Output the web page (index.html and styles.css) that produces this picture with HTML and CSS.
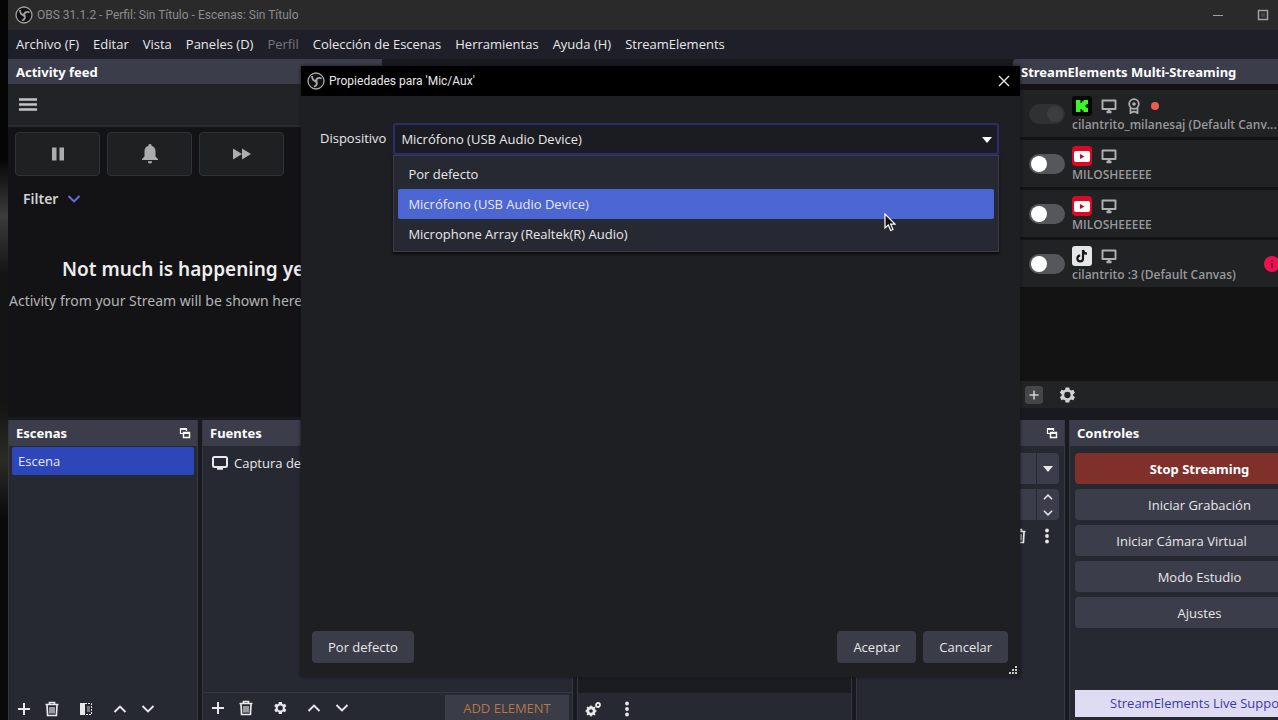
FILE: index.html
```html
<!DOCTYPE html>
<html lang="es">
<head>
    <meta charset="UTF-8">
    <title>OBS 31.1.2 - Perfil: Sin Título - Escenas: Sin Título</title>
    <link rel="stylesheet" href="styles.css">
</head>
<body>
    <!-- Shared icons -->
    <svg class="sprite" aria-hidden="true">
        <symbol id="obs" viewBox="0 0 18 18"><circle cx="9" cy="9" r="8" fill="#111" stroke="currentColor" stroke-width="1.3"/><path d="M5 4c0 3 1.500 4.800 4 5M14.500 6.500c-2.500-1.500-5-.5-5.500 2.500M7 14.500c2.800-.8 3.700-3 2-5.500" fill="none" stroke="currentColor" stroke-width="1.800"/><circle cx="9" cy="9" r="1.500" fill="currentColor"/></symbol>
        <symbol id="plus" viewBox="0 0 16 16"><path d="M8 2v12M2 8h12" stroke="currentColor" stroke-width="2"/></symbol>
        <symbol id="trash" viewBox="0 0 16 16"><path d="M1.500 3.500h13M5.500 3V1.500h5V3M3 4l.6 10.500h8.800L13 4" fill="none" stroke="currentColor" stroke-width="1.700"/><path d="M6 6v6.500M8 6v6.500M10 6v6.500" stroke="currentColor" stroke-width="1.200"/></symbol>
        <symbol id="up" viewBox="0 0 16 16"><path d="M2.500 11 8 5.500l5.500 5.500" fill="none" stroke="currentColor" stroke-width="1.900"/></symbol>
        <symbol id="down" viewBox="0 0 16 16"><path d="M2.500 5 8 10.500 13.500 5" fill="none" stroke="currentColor" stroke-width="1.900"/></symbol>
        <symbol id="gear" viewBox="0 0 24 24"><path fill="currentColor" fill-rule="evenodd" d="M19.400 13a7 7 0 0 0 0-2l2.200-1.700-2.100-3.600-2.600 1a8 8 0 0 0-1.700-1L14.800 3h-4.600l-.4 2.700a8 8 0 0 0-1.700 1l-2.600-1-2.100 3.600L5.600 11a7 7 0 0 0 0 2l-2.200 1.700 2.100 3.600 2.600-1a8 8 0 0 0 1.700 1l.4 2.700h4.600l.4-2.700a8 8 0 0 0 1.700-1l2.600 1 2.100-3.600zM12.500 15.800a3.800 3.800 0 1 1 0-7.600 3.800 3.800 0 0 1 0 7.600z"/></symbol>
        <symbol id="dots" viewBox="0 0 16 16"><circle cx="8" cy="2.500" r="1.900" fill="currentColor"/><circle cx="8" cy="8" r="1.900" fill="currentColor"/><circle cx="8" cy="13.500" r="1.900" fill="currentColor"/></symbol>
        <symbol id="popout" viewBox="0 0 12 12"><path d="M7.500 4V1.500h-6v5H4" fill="none" stroke="currentColor" stroke-width="1.200"/><path d="M1 2h7" stroke="currentColor" stroke-width="1.800"/><path d="M4.500 5.500h6v5h-6zM4 6.200h7" fill="none" stroke="currentColor" stroke-width="1.400"/></symbol>
        <symbol id="screen" viewBox="0 0 16 16"><path d="M1.500 2.500h13v8.500h-13z" fill="none" stroke="currentColor" stroke-width="1.900" stroke-linejoin="round"/><path d="M5.500 14h5M8 11v3" stroke="currentColor" stroke-width="2.400"/></symbol>
        <symbol id="source" viewBox="0 0 18 18"><rect x="2" y="3" width="14" height="10" rx="1.500" fill="none" stroke="currentColor" stroke-width="2"/><path d="M6 14.500h6" stroke="currentColor" stroke-width="2.500"/></symbol>
        <symbol id="youtube" viewBox="0 0 20 20"><rect width="20" height="20" rx="4" fill="#dc0826"/><rect x="2" y="5" width="16" height="11" rx="2" fill="#fff"/><path d="M8 8v5l4.500-2.500z" fill="#c00522"/></symbol>
        <symbol id="arrow" viewBox="0 0 10 6"><path d="M0 0h10L5 6z" fill="currentColor"/></symbol>
    </svg>

    <div class="window">
        <header class="titlebar">
            <svg class="icon-18"><use href="#obs"/></svg>
            <span class="caption">OBS 31.1.2 - Perfil: Sin Título - Escenas: Sin Título</span>
            <button class="win-btn" aria-label="Minimizar"><svg class="icon-12" viewBox="0 0 12 12"><path d="M1 6.500h10" stroke="currentColor"/></svg></button>
            <button class="win-btn" aria-label="Maximizar"><svg class="icon-12" viewBox="0 0 12 12"><path d="M1.500 1.500h9v9h-9z" fill="none" stroke="currentColor" stroke-width="1.500"/><path d="M4 4h4v4H4z" fill="#444"/></svg></button>
        </header>

        <nav class="menubar">
            <button>Archivo (F)</button>
            <button>Editar</button>
            <button>Vista</button>
            <button>Paneles (D)</button>
            <button disabled>Perfil</button>
            <button>Colección de Escenas</button>
            <button>Herramientas</button>
            <button>Ayuda (H)</button>
            <button>StreamElements</button>
        </nav>

        <main class="upper">
            <section class="feed">
                <h2 class="dock-title">Activity feed</h2>
                <div class="feed-toolbar">
                    <button aria-label="Menu"><svg class="icon-20" viewBox="0 0 20 20"><path d="M1 4.500h18M1 9.500h18M1 14.500h18" stroke="currentColor" stroke-width="2.500"/></svg></button>
                </div>
                <div class="feed-body">
                    <div class="feed-actions">
                        <button aria-label="Pause"><svg class="icon-20" viewBox="0 0 20 20"><path d="M4 3.500h4.500v13H4zM11.500 3.500H16v13h-4.500z" fill="currentColor"/></svg></button>
                        <button aria-label="Mute"><svg class="icon-20" viewBox="0 0 20 20"><path d="M10 0a1.500 1.500 0 0 1 1.500 1.700C14 2.400 15.500 4.500 15.500 7v5.500L18 15v1H2v-1l2.500-2.500V7c0-2.500 1.500-4.600 4-5.300A1.500 1.500 0 0 1 10 0zM7.800 17.300h4.400a2.200 2.200 0 0 1-4.400 0z" fill="currentColor"/></svg></button>
                        <button aria-label="Skip"><svg class="icon-20" viewBox="0 0 20 20"><path d="M1 4.500v11l9-5.500zM10 4.500v11l9-5.500z" fill="currentColor"/></svg></button>
                    </div>
                    <button class="filter">Filter <svg class="icon-16"><use href="#down"/></svg></button>
                    <h3>Not much is happening yet</h3>
                    <p>Activity from your Stream will be shown here</p>
                </div>
            </section>

            <section class="preview"></section>

            <section class="multi">
                <h2 class="dock-title">StreamElements Multi-Streaming</h2>
                <ul class="channels">
                    <li>
                        <input type="checkbox" class="switch" id="ch1" disabled>
                        <label for="ch1">
                            <span class="badges">
                                <svg class="icon-20" viewBox="0 0 20 20"><rect width="20" height="20" rx="3" fill="#050805"/><path d="M4 4h4.500v3H10V5.500h1.500V4H16v4h-1.500v1.500H13v1h1.500V12H16v4h-4.500v-1.500H10V13H8.500v3H4z" fill="#3df52b"/></svg>
                                <svg class="icon-16"><use href="#screen"/></svg>
                                <svg class="icon-16" viewBox="0 0 16 16"><circle cx="8" cy="6" r="4.800" fill="none" stroke="currentColor" stroke-width="1.800"/><circle cx="8" cy="6" r="1.800" fill="currentColor"/><path d="M4.500 10v5L8 13.500l3.500 1.500v-5" fill="none" stroke="currentColor" stroke-width="1.800"/></svg>
                                <i class="live"></i>
                            </span>
                            cilantrito_milanesaj (Default Canv...
                        </label>
                    </li>
                    <li>
                        <input type="checkbox" class="switch" id="ch2">
                        <label for="ch2">
                            <span class="badges"><svg class="icon-20"><use href="#youtube"/></svg><svg class="icon-16"><use href="#screen"/></svg></span>
                            MILOSHEEEEE
                        </label>
                    </li>
                    <li>
                        <input type="checkbox" class="switch" id="ch3">
                        <label for="ch3">
                            <span class="badges"><svg class="icon-20"><use href="#youtube"/></svg><svg class="icon-16"><use href="#screen"/></svg></span>
                            MILOSHEEEEE
                        </label>
                    </li>
                    <li>
                        <input type="checkbox" class="switch" id="ch4">
                        <label for="ch4">
                            <span class="badges">
                                <svg class="icon-20" viewBox="0 0 20 20"><rect width="20" height="20" rx="3" fill="#e6e6e8"/><path d="M11 4v8.500a2.800 2.800 0 1 1-2.800-2.800M11 4c.3 2.300 1.700 3.600 4 3.700" fill="none" stroke="#17171a" stroke-width="2.200"/></svg>
                                <svg class="icon-16"><use href="#screen"/></svg>
                            </span>
                            cilantrito :3 (Default Canvas)
                        </label>
                        <svg class="alert icon-16" viewBox="0 0 16 16"><circle cx="8" cy="8" r="8" fill="#ee1152"/><path d="M8 4v1.500M8 7v5" stroke="#8b0a38" stroke-width="2"/></svg>
                    </li>
                </ul>
                <div class="multi-footer">
                    <button class="add" aria-label="Add"><svg class="icon-12"><use href="#plus"/></svg></button>
                    <button aria-label="Settings"><svg class="icon-20"><use href="#gear"/></svg></button>
                </div>
            </section>
        </main>

        <footer class="lower">
            <section class="dock">
                <h2 class="dock-title">Escenas <svg class="icon-12"><use href="#popout"/></svg></h2>
                <ul class="scenes"><li>Escena</li></ul>
                <div class="dock-toolbar">
                    <button aria-label="Añadir"><svg class="icon-16"><use href="#plus"/></svg></button>
                    <button aria-label="Eliminar"><svg class="icon-16"><use href="#trash"/></svg></button>
                    <button class="spaced" aria-label="Filtros"><svg class="icon-16" viewBox="0 0 16 16"><path d="M2 2h5v12H2z" fill="currentColor"/><path d="M7 2.500h6.500v11H7" fill="none" stroke="currentColor" stroke-dasharray="2 1"/><path d="M9 5h3v6H9z" fill="#777"/></svg></button>
                    <button class="spaced" aria-label="Subir"><svg class="icon-16"><use href="#up"/></svg></button>
                    <button aria-label="Bajar"><svg class="icon-16"><use href="#down"/></svg></button>
                </div>
            </section>

            <section class="dock">
                <h2 class="dock-title">Fuentes</h2>
                <ul class="sources"><li><svg class="icon-18"><use href="#source"/></svg>Captura de pantalla</li></ul>
                <div class="dock-toolbar lined">
                    <button aria-label="Añadir fuente"><svg class="icon-16"><use href="#plus"/></svg></button>
                    <button aria-label="Eliminar fuente"><svg class="icon-16"><use href="#trash"/></svg></button>
                    <button class="spaced" aria-label="Propiedades"><svg class="icon-16"><use href="#gear"/></svg></button>
                    <button class="spaced" aria-label="Subir fuente"><svg class="icon-16"><use href="#up"/></svg></button>
                    <button aria-label="Bajar fuente"><svg class="icon-16"><use href="#down"/></svg></button>
                    <button class="add-element">ADD ELEMENT</button>
                </div>
            </section>

            <section class="dock">
                <h2 class="dock-title">Mezclador de audio</h2>
                <div class="mixer"></div>
                <div class="dock-toolbar">
                    <button aria-label="Propiedades avanzadas"><svg class="icon-16" viewBox="0 0 16 16"><circle cx="6" cy="10" r="3.500" fill="none" stroke="currentColor" stroke-width="2.500"/><path d="M6 4.500v11M.5 10h11M2 6l8 8M10 6l-8 8" stroke="currentColor" stroke-width="1.500"/><circle cx="6" cy="10" r="1.800" fill="#262832"/><circle cx="13" cy="4" r="2" fill="none" stroke="currentColor" stroke-width="1.800"/></svg></button>
                    <button class="spaced" aria-label="Más"><svg class="icon-16"><use href="#dots"/></svg></button>
                </div>
            </section>

            <section class="dock">
                <h2 class="dock-title">Transiciones <svg class="icon-12"><use href="#popout"/></svg></h2>
                <div class="transitions">
                    <button class="field" aria-label="Transición"><span><svg class="arrow"><use href="#arrow"/></svg></span></button>
                    <div class="field">
                        <span class="stepper">
                            <button aria-label="Aumentar"><svg class="icon-12"><use href="#up"/></svg></button>
                            <button aria-label="Reducir"><svg class="icon-12"><use href="#down"/></svg></button>
                        </span>
                    </div>
                    <div class="row">
                        <button aria-label="Quitar transición"><svg class="icon-16"><use href="#trash"/></svg></button>
                        <button aria-label="Opciones"><svg class="icon-16"><use href="#dots"/></svg></button>
                    </div>
                </div>
            </section>

            <section class="dock">
                <h2 class="dock-title">Controles</h2>
                <div class="controls">
                    <button class="stop">Stop Streaming</button>
                    <button>Iniciar Grabación</button>
                    <div class="split">
                        <button>Iniciar Cámara Virtual</button>
                        <button class="config" aria-label="Configurar cámara virtual"><svg class="icon-16"><use href="#gear"/></svg></button>
                    </div>
                    <button>Modo Estudio</button>
                    <button>Ajustes</button>
                    <a class="support" href="#">StreamElements Live Support</a>
                </div>
            </section>
        </footer>
    </div>

    <dialog class="properties" open aria-labelledby="propTitle">
        <header>
            <svg class="icon-18"><use href="#obs"/></svg>
            <h1 id="propTitle">Propiedades para 'Mic/Aux'</h1>
            <button aria-label="Cerrar"><svg class="icon-12" viewBox="0 0 12 12"><path d="m1 1 10 10M11 1 1 11" stroke="currentColor" stroke-width="1.400"/></svg></button>
        </header>
        <form class="prop-form" onsubmit="return false">
            <label for="device">Dispositivo</label>
            <div class="combo">
                <select id="device">
                    <option>Por defecto</option>
                    <option selected>Micrófono (USB Audio Device)</option>
                    <option>Microphone Array (Realtek(R) Audio)</option>
                </select>
                <svg class="arrow"><use href="#arrow"/></svg>
                <ul class="popup" role="listbox" aria-label="Dispositivo">
                    <li role="option">Por defecto</li>
                    <li role="option" aria-selected="true">Micrófono (USB Audio Device)</li>
                    <li role="option">Microphone Array (Realtek(R) Audio)</li>
                </ul>
            </div>
        </form>
        <div class="prop-buttons">
            <button class="defaults">Por defecto</button>
            <button>Aceptar</button>
            <button>Cancelar</button>
        </div>
        <svg class="grip" viewBox="0 0 9 9"><path d="M6 0h2v2H6zM3 3h2v2H3zM6 3h2v2H6zM0 6h2v2H0zM3 6h2v2H3zM6 6h2v2H6z" fill="#c8c8c8"/></svg>
    </dialog>

    <svg class="pointer" viewBox="0 0 12 19"><path d="M1 1v14l3.300-3 2.400 5.500 2.300-1-2.400-5.300H11z" fill="#111" stroke="#fff" stroke-width="1.200"/></svg>
</body>
</html>
```

FILE: styles.css
```css
* {
    box-sizing: border-box;
}

body {
    margin: 0;
    height: 100vh;
    overflow: hidden;
    position: relative;
    padding-left: 8px;
    background: linear-gradient(#050505 0 22%, #3c3c3c 30%, #141414 38% 56%, #2a2a26 64%, #0a0a0a 72%);
    color: #e8e8ea;
    font-family: "Open Sans", "Noto Sans", sans-serif;
    font-size: 13px;
    line-height: 18px;
}

h1, h2, h3, p, ul {
    margin: 0;
    padding: 0;
    list-style: none;
}

button {
    display: flex;
    align-items: center;
    justify-content: center;
    margin: 0;
    padding: 0;
    border: none;
    background: none;
    color: inherit;
    font: inherit;
}

svg {
    display: block;
    flex: none;
}

.sprite {
    position: absolute;
    width: 0;
    height: 0;
}

.icon-12 { width: 12px; height: 12px; }
.icon-16 { width: 16px; height: 16px; }
.icon-18 { width: 18px; height: 18px; }
.icon-20 { width: 20px; height: 20px; }
.arrow { width: 10px; height: 6px; }

/* Main window, runs past the right edge of the screen */
.window {
    width: calc(100% + 52px);
    height: 100%;
    display: flex;
    flex-direction: column;
    background: #191a20;
}

.titlebar {
    height: 30px;
    display: flex;
    align-items: center;
    gap: 4px;
    padding: 0 47px 0 7px;
    background: #2a2a2a;
    color: #a0a0a0;
}

.caption {
    flex: 1;
    font-family: Roboto, sans-serif;
    font-size: 12px;
    color: #8c8c8c;
}

.win-btn {
    width: 41px;
}

.menubar {
    height: 29px;
    display: flex;
    padding: 0 0 2px 1px;
    background: #1e1f28;
}

.menubar button {
    padding: 0 7px;
}

.menubar button:disabled {
    color: #77777e;
}

.dock-title {
    height: 26px;
    flex: none;
    display: flex;
    align-items: center;
    justify-content: space-between;
    padding: 0 6px 0 7px;
    background: #3c3d4a;
    color: #fff;
    font-family: "Noto Sans", sans-serif;
    font-size: 13px;
    font-weight: 700;
}

.upper {
    flex: 1;
    display: grid;
    grid-template-columns: 374px 1fr 317px;
    padding-bottom: 3px;
}

.upper .dock-title {
    height: 25px;
    padding-left: 8px;
}

.feed,
.multi {
    display: flex;
    flex-direction: column;
}

/* Activity feed */
.feed-toolbar {
    height: 43px;
    display: flex;
    padding-left: 10px;
    background: #222326;
    border-bottom: 2px solid #2a2b2e;
    color: #c4c4c6;
}

.feed-body {
    flex: 1;
    padding: 5px 0 0 7px;
    background: #131315;
    font-family: "Noto Sans", sans-serif;
}

.feed-actions {
    display: flex;
    gap: 7px;
}

.feed-actions button {
    width: 85px;
    height: 44px;
    background: #1e2022;
    border: 1px solid #303235;
    border-radius: 4px;
    color: #acacae;
}

.filter {
    gap: 8px;
    margin: 13px 0 0 8px;
    font-size: 14px;
    font-weight: 600;
    line-height: 20px;
    color: #d2d2d4;
}

.filter svg {
    color: #6570de;
}

.feed-body h3 {
    margin: 46px 0 0 47px;
    font-size: 19px;
    font-weight: 600;
    line-height: 28px;
    color: #ededee;
    white-space: nowrap;
}

.feed-body p {
    margin: 8px 0 0 -6px;
    font-size: 14px;
    line-height: 20px;
    color: #b4b4b6;
    white-space: nowrap;
}

/* Multi-streaming */
.multi .dock-title {
    border-radius: 4px 0 0 0;
}

.channels {
    flex: 1;
    padding: 6px 0 0 7px;
    background: #131314;
}

.channels li {
    height: 47px;
    margin-bottom: 3px;
    display: flex;
    align-items: center;
    gap: 7px;
    padding-left: 9px;
    background: #212224;
}

.channels label {
    width: 206px;
    height: 44px;
    padding-top: 4px;
    font-size: 12px;
    font-weight: 600;
    line-height: 18px;
    color: #98989a;
    white-space: nowrap;
}

.badges {
    height: 20px;
    display: flex;
    align-items: center;
    gap: 9px;
    color: #b0b0b2;
}

.live {
    width: 8px;
    height: 8px;
    border-radius: 50%;
    background: #f0594f;
}

.switch {
    appearance: none;
    width: 36px;
    height: 20px;
    margin: 0;
    padding: 2px;
    flex: none;
    border-radius: 10px;
    background: #56575a;
}

.switch::before {
    content: "";
    display: block;
    width: 16px;
    height: 16px;
    border-radius: 50%;
    background: #fff;
}

.switch:disabled {
    background: #303133;
}

.switch:disabled::before {
    margin-left: auto;
    background: #3c3d3f;
}

.alert {
    margin-left: -21px;
}

.multi-footer {
    height: 27px;
    margin-bottom: 9px;
    display: flex;
    align-items: center;
    gap: 14px;
    padding-left: 12px;
    background: #222324;
    color: #d2d2d4;
}

.multi-footer .add {
    width: 18px;
    height: 18px;
    border-radius: 3px;
    background: #454648;
}

/* Bottom docks */
.lower {
    height: 300px;
    display: grid;
    grid-template-columns: 190px 1fr 275px 209px 261px;
    gap: 4px;
}

.dock {
    display: flex;
    flex-direction: column;
    min-width: 0;
    background: #262832;
    border: solid #343641;
    border-width: 0 1px;
}

.scenes,
.sources,
.mixer {
    flex: 1;
}

.scenes {
    padding: 1px 3px;
}

.scenes li {
    height: 28px;
    padding: 5px 6px;
    border-radius: 2px;
    background: #2d47bb;
}

.sources {
    padding: 8px;
}

.sources li {
    display: flex;
    align-items: center;
    gap: 5px;
}

.mixer {
    background: #1b1c21;
}

.dock-toolbar {
    height: 27px;
    display: flex;
    align-items: center;
    gap: 12px;
    padding: 5px 0 0 7px;
}

.dock-toolbar .spaced {
    margin-left: 6px;
}

.dock-toolbar.lined {
    height: 28px;
    padding: 3px 3px 0 7px;
    border-top: 1px solid #343641;
}

.add-element {
    width: 124px;
    height: 27px;
    margin-left: auto;
    background: #3a3c48;
    color: #b87545;
}

.transitions {
    display: flex;
    flex-direction: column;
    gap: 5px;
    padding: 7px 5px;
}

.field {
    height: 31px;
    display: flex;
    justify-content: flex-end;
    align-items: stretch;
    border-radius: 4px;
    background: #3c3d4a;
}

.field > span {
    width: 23px;
    display: flex;
    align-items: center;
    justify-content: center;
    border-left: 1px solid #262832;
}

.field .stepper {
    flex-direction: column;
    gap: 4px;
}

.transitions .row {
    display: flex;
    justify-content: flex-end;
    gap: 12px;
    padding: 3px 4px;
}

.controls {
    flex: 1;
    display: flex;
    flex-direction: column;
    gap: 5px;
    padding: 7px 5px 3px;
}

.controls button {
    height: 31px;
    border-radius: 4px;
    background: #3c3d4a;
}

.controls .stop {
    background: #80302b;
    color: #fff;
    font-family: "Noto Sans", sans-serif;
    font-weight: 700;
}

.split {
    display: flex;
    gap: 5px;
}

.split button {
    flex: 1;
}

.split .config {
    flex: none;
    width: 31px;
}

.support {
    height: 27px;
    margin-top: auto;
    line-height: 27px;
    text-align: center;
    text-decoration: none;
    background: #dedcf2;
    color: #3d39a8;
}

/* Source properties dialog */
.properties {
    position: absolute;
    inset: 66px 258px 43px 301px;
    z-index: 2;
    width: auto;
    height: auto;
    max-width: none;
    max-height: none;
    margin: 0;
    padding: 0;
    border: none;
    display: flex;
    flex-direction: column;
    background: #1e1f23;
    box-shadow: 0 0 3px #111216;
    color: #e8e8ea;
}

.properties header {
    height: 30px;
    display: flex;
    align-items: center;
    gap: 4px;
    padding: 0 10px 0 6px;
    background: #000;
}

.properties header > svg {
    color: #a8a8a8;
}

.properties h1 {
    flex: 1;
    font-family: Roboto, sans-serif;
    font-size: 12px;
    font-weight: 400;
}

.prop-form {
    flex: 1;
    display: flex;
    align-items: flex-start;
    gap: 7px;
    padding: 27px 21px 0 19px;
}

.prop-form label {
    line-height: 30px;
}

.combo {
    flex: 1;
    position: relative;
}

.combo select {
    appearance: none;
    display: block;
    width: 100%;
    height: 32px;
    padding: 0 6px;
    border: 2px solid #2c2b70;
    border-radius: 3px;
    background: #1b1c22;
    color: inherit;
    font: inherit;
    outline: none;
}

.combo .arrow {
    position: absolute;
    top: 14px;
    right: 7px;
    color: #fff;
}

.popup {
    position: absolute;
    top: 32px;
    left: 0;
    right: 0;
    padding: 3px 4px 2px;
    border: 1px solid #3b3c48;
    background: #272932;
    box-shadow: 0 2px 2px #0c0c0e;
}

.popup li {
    height: 30px;
    padding: 6px 10px;
    border-radius: 2px;
}

.popup [aria-selected="true"] {
    background: #4c66d4;
}

.prop-buttons {
    display: flex;
    gap: 7px;
    padding: 0 12px 14px 11px;
}

.prop-buttons button {
    height: 32px;
    padding: 0 16px;
    border-radius: 4px;
    background: #3a3c48;
}

.prop-buttons .defaults {
    margin-right: auto;
}

.grip {
    position: absolute;
    right: 2px;
    bottom: 2px;
    width: 9px;
    height: 9px;
}

.pointer {
    position: absolute;
    left: 884px;
    top: 213px;
    z-index: 3;
    width: 12px;
    height: 19px;
}
```
